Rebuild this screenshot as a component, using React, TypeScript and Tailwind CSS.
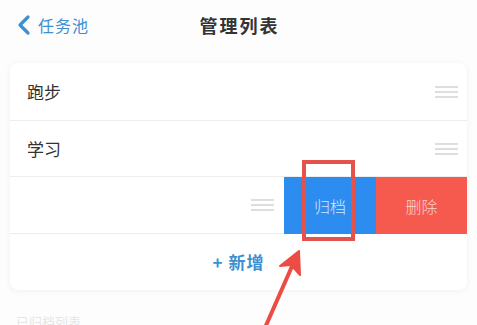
import React from 'react'

const FONT = { fontFamily: '"Noto Sans CJK SC", "Noto Sans", sans-serif' }

function Handle() {
  return (
    <div className="flex flex-col gap-[3px] w-[23px]">
      <div className="h-[2px] bg-[#dedede]" />
      <div className="h-[2px] bg-[#dedede]" />
      <div className="h-[2px] bg-[#dedede]" />
    </div>
  )
}

function Row({ title, tall }: { title: string; tall?: boolean }) {
  return (
    <div className={`${tall ? 'h-[58px]' : 'h-[56px]'} flex items-center justify-between pl-[17px] pr-[9px] border-b border-[#ededed]`}>
      <span className="text-[17px] text-[#333]">{title}</span>
      <Handle />
    </div>
  )
}

export default function App() {
  return (
    <div className="relative w-[477px] h-[325px] overflow-hidden bg-[#fdfdfd]" style={FONT}>
      <header className="h-[50px] flex items-center relative">
        <div className="flex items-center gap-[7px] pl-[16px] text-[#3e8fd0]">
          <svg width="15" height="22" viewBox="0 0 15 22" fill="none" stroke="currentColor" strokeWidth={3.2} strokeLinecap="round" strokeLinejoin="round">
            <path d="M12 3 4 11l8 8" />
          </svg>
          <span className="text-[16px] tracking-[1px]">任务池</span>
        </div>
        <div className="absolute left-0 right-0 top-0 h-[50px] flex items-center justify-center pointer-events-none">
          <span className="text-[18px] font-bold text-[#333] tracking-[2px] ml-[2px]">管理列表</span>
        </div>
      </header>

      <div className="mx-[10px] mt-[13px] bg-white rounded-[8px] shadow-[0_1px_6px_rgba(0,0,0,0.06)] overflow-hidden">
        <Row title="跑步" tall />
        <Row title="学习" />
        <div className="h-[57px] flex">
          <div className="flex-1 flex items-center justify-end pr-[10px] border-b border-[#ededed]">
            <Handle />
          </div>
          <div className="w-[92px] bg-[#2d8cf0] flex items-center justify-center text-[16px] font-light text-[#d6e8ff]">归档</div>
          <div className="w-[91px] bg-[#f65a4f] flex items-center justify-center text-[16px] font-light text-[#ffd3cf]">删除</div>
        </div>
        <div className="h-[56px] flex items-center justify-center text-[#3e8fd0] text-[17px] font-bold tracking-[1px]">
          + 新增
        </div>
      </div>

      <div className="pl-[16px] pt-[22px] text-[13px] text-[#e6e6e6]">已归档列表</div>

      {/* annotation box */}
      <div className="absolute left-[302px] top-[160px] w-[53px] h-[81px] border-[4px] border-[#e5524a]" />
      {/* annotation arrow */}
      <svg className="absolute left-0 top-0" width="477" height="325" viewBox="0 0 477 325">
        <line x1="264" y1="330" x2="293" y2="264" stroke="#ec4c43" strokeWidth={4} strokeLinecap="round" />
        <path d="M299 251 L280 266 L291 265 L300 275 Z" fill="#ec4c43" stroke="#ec4c43" strokeWidth={2} strokeLinejoin="round" />
      </svg>
    </div>
  )
}
